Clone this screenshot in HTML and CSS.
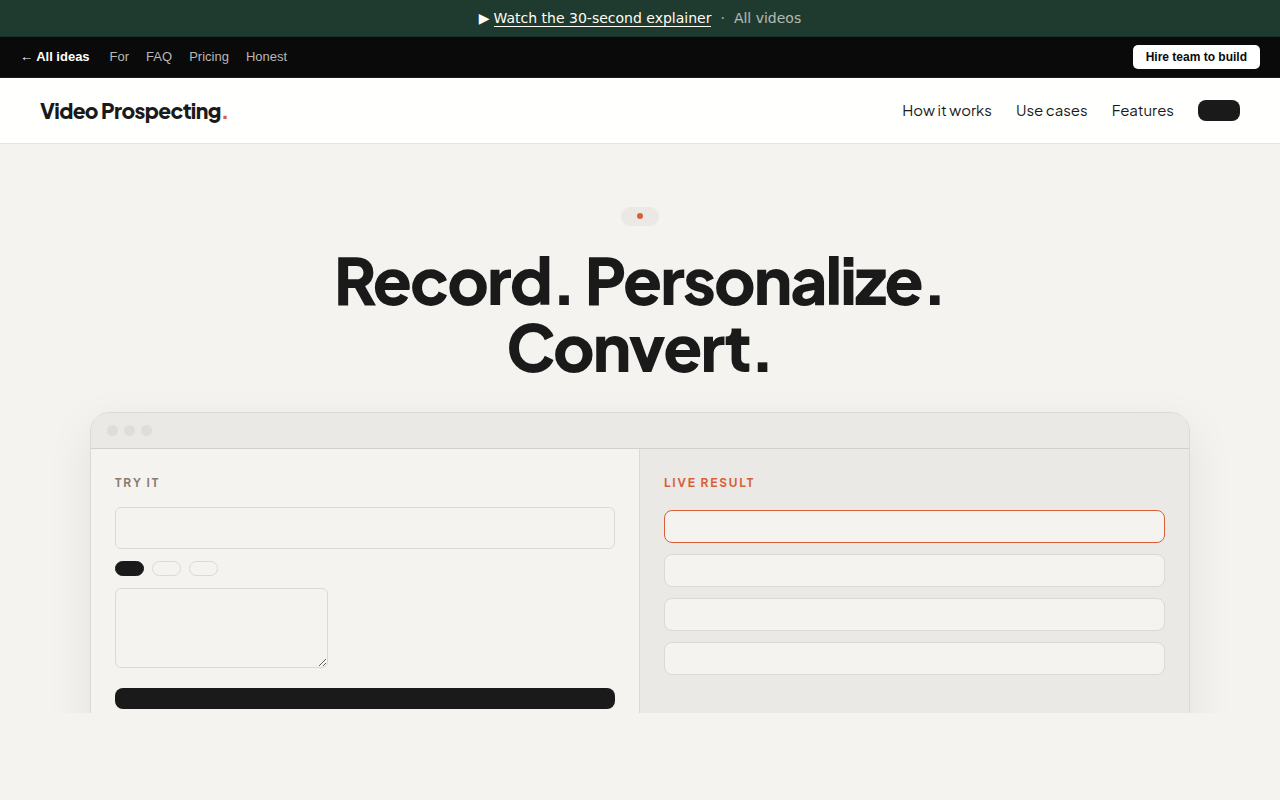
FILE: index.html
```html
<!DOCTYPE html>
<html lang="en">
<head>
<meta charset="utf-8">
<meta name="viewport" content="width=device-width, initial-scale=1">
<title>Video Prospecting</title>
<link rel="stylesheet" href="styles.css">
</head>
<body>
<div class="promo">
  <span class="promo-play">▶</span>
  <a class="promo-watch" href="#">Watch the 30-second explainer</a>
  <span class="promo-dot">·</span>
  <a class="promo-all" href="#">All videos</a>
</div>
<nav class="ideas">
  <a class="ideas-back" href="#">← All ideas</a>
  <a href="#">For</a>
  <a href="#">FAQ</a>
  <a href="#">Pricing</a>
  <a href="#">Honest</a>
  <a class="ideas-hire" href="#">Hire team to build</a>
</nav>
<header class="site-header">
  <a class="brand" href="#">Video Prospecting<span class="brand-dot">.</span></a>
  <nav class="site-nav">
    <a class="nav-link" href="#">How it works</a>
    <a class="nav-link" href="#">Use cases</a>
    <a class="nav-link" href="#">Features</a>
    <a class="nav-cta" href="#"></a>
  </nav>
</header>
<main class="hero">
  <div class="badge"><span class="badge-dot"></span></div>
  <h1 class="headline">Record. Personalize. Convert.</h1>
  <div class="demo">
    <div class="demo-bar"><span class="dot"></span><span class="dot"></span><span class="dot"></span></div>
    <div class="demo-body">
      <section class="panel">
        <label class="panel-label" id="try-label" for="try-input">TRY IT</label>
        <input class="field" id="try-input" type="text">
        <div class="chips">
          <button class="chip chip-active" type="button"></button>
          <button class="chip" type="button"></button>
          <button class="chip" type="button"></button>
        </div>
        <textarea class="message" aria-labelledby="try-label"></textarea>
        <button class="submit" type="button"></button>
      </section>
      <section class="panel panel-result">
        <h2 class="panel-label panel-label-live">LIVE RESULT</h2>
        <div class="results">
          <div class="result result-active"></div>
          <div class="result"></div>
          <div class="result"></div>
          <div class="result"></div>
        </div>
      </section>
    </div>
  </div>
</main>
</body>
</html>
```
FILE: styles.css
```css
:root {
  --ink: #1a1a1a;
  --paper: #f4f3ef;
  --shade: #eae9e5;
  --line: #dad9d5;
  --accent: #d95f38;
}
* { box-sizing: border-box; }
body {
  margin: 0;
  background: var(--paper);
  color: var(--ink);
  font-family: "Plus Jakarta Sans", Inter, sans-serif;
}
a { color: inherit; text-decoration: none; }

.promo {
  display: flex;
  align-items: center;
  justify-content: center;
  height: 37px;
  background: #1f3a2e;
  border-bottom: 1px solid #1a3027;
  color: #fffdf5;
  font: 14px/20px "DejaVu Sans", sans-serif;
}
.promo-watch {
  margin-left: 4px;
  padding-top: 2px;
  line-height: 15px;
  border-bottom: 1px solid currentColor;
}
.promo-dot { margin: 0 9px; opacity: .65; }
.promo-all { opacity: .65; }

.ideas {
  display: flex;
  align-items: center;
  gap: 17px;
  height: 41px;
  padding: 0 20px;
  background: #0a0a0a;
  border-bottom: 1px solid #1c1c1c;
  color: #b8b8b8;
  font: 13px/16px "Liberation Sans", Arial, sans-serif;
}
.ideas-back { margin-right: 3px; color: #fff; font-weight: 700; }
.ideas-hire {
  margin-left: auto;
  padding: 4px 13px;
  border-radius: 5px;
  background: #fff;
  color: #0a0a0a;
  font-size: 12px;
  font-weight: 700;
}

.site-header {
  display: flex;
  align-items: center;
  justify-content: space-between;
  padding: 18px 40px;
  background: #fffffd;
  border-bottom: 1px solid #e4e3df;
}
.brand {
  font-size: 21px;
  line-height: 29px;
  font-weight: 800;
  letter-spacing: -0.03em;
}
.brand-dot { color: var(--accent); }
.site-nav {
  display: flex;
  align-items: center;
  gap: 24px;
  font-size: 15px;
  line-height: 19px;
}
.nav-link { padding-bottom: 2px; }
.nav-cta {
  width: 42px;
  height: 21px;
  border-radius: 8px;
  background: var(--ink);
}

.hero {
  display: flex;
  flex-direction: column;
  align-items: center;
  padding: 63px 40px 0;
  overflow: hidden;
}
.badge {
  padding: 6px 16px 7px;
  border-radius: 10px;
  background: var(--shade);
}
.badge-dot {
  display: block;
  width: 6px;
  height: 6px;
  border-radius: 50%;
  background: var(--accent);
}
.headline {
  max-width: 800px;
  margin: 20px 0 32px;
  font-size: 64px;
  line-height: 67px;
  font-weight: 800;
  letter-spacing: -0.03em;
  text-align: center;
}

.demo {
  width: 100%;
  max-width: 1100px;
  margin-bottom: -37px;
  overflow: hidden;
  border: 1px solid var(--line);
  border-radius: 20px;
  background: var(--paper);
  box-shadow: 0 16px 48px rgba(0, 0, 0, .08);
}
.demo-bar {
  display: flex;
  gap: 6px;
  padding: 12px 16px;
  background: var(--shade);
  border-bottom: 1px solid #d1d0cc;
}
.dot {
  width: 11px;
  height: 11px;
  border-radius: 50%;
  background: #dddddc;
}
.demo-body { display: grid; grid-template-columns: 1fr 1fr; }
.panel { padding: 24px 24px 40px; border-right: 1px solid var(--line); }
.panel-result { border-right: 0; background: var(--shade); }
.panel-label {
  display: block;
  margin: 0 0 14px;
  color: #8a7a72;
  font-size: 12px;
  line-height: 20px;
  font-weight: 700;
  letter-spacing: 0.15em;
}
.panel-label-live { margin-bottom: 17px; color: var(--accent); }
.field, .message {
  display: block;
  border: 1px solid var(--line);
  border-radius: 6px;
  background: var(--paper);
  color: var(--ink);
  font: 15px/20px "Plus Jakarta Sans", Inter, sans-serif;
}
.field { width: 100%; height: 42px; padding: 10px 14px; }
.chips { display: flex; gap: 8px; margin: 12px 0; }
.chip {
  width: 29px;
  height: 15px;
  padding: 0;
  border: 1px solid var(--line);
  border-radius: 8px;
  background: transparent;
}
.chip-active { border-color: var(--ink); background: var(--ink); }
.message { width: 213px; height: 80px; padding: 10px 14px; }
.submit {
  display: block;
  width: 100%;
  height: 21px;
  margin-top: 20px;
  border: 0;
  border-radius: 8px;
  background: var(--ink);
}
.results { display: grid; gap: 11px; }
.result {
  height: 33px;
  border: 1px solid var(--line);
  border-radius: 8px;
  background: var(--paper);
}
.result-active { border-color: var(--accent); }
```
